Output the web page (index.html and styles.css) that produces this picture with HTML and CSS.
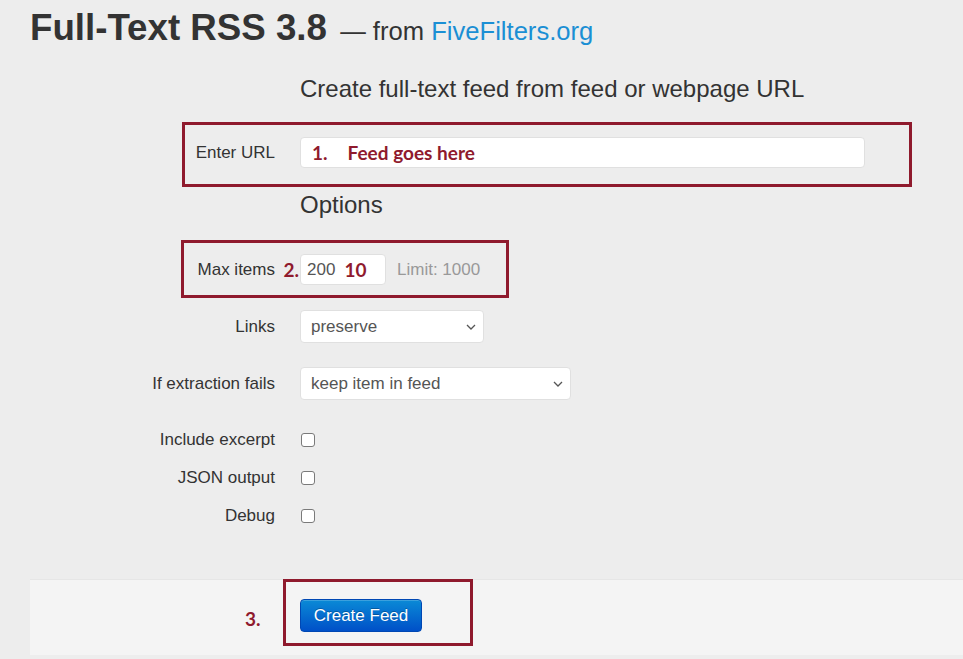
FILE: index.html
```html
<!DOCTYPE html>
<html lang="en">
<head>
    <meta charset="UTF-8">
    <meta name="viewport" content="width=device-width, initial-scale=1.0">
    <title>Full-Text RSS 3.8</title>
    <link rel="stylesheet" href="styles.css">
</head>
<body>
    <div class="page">
        <h1>Full-Text RSS 3.8 <small>&mdash; from <a href="#">FiveFilters.org</a></small></h1>

        <form class="feed-form" onsubmit="return false">
            <div class="legend">Create full-text feed from feed or webpage URL</div>

            <div class="row row-url marked">
                <label for="url">Enter URL</label>
                <div class="control">
                    <div class="input input-url">
                        <span class="note">1.</span>
                        <span class="note note-text">Feed goes here</span>
                    </div>
                </div>
            </div>

            <div class="legend legend-options">Options</div>

            <div class="row row-max marked">
                <label for="max">Max items</label>
                <div class="control">
                    <span class="note step">2.</span>
                    <div class="input input-max">
                        <span class="value">200</span>
                        <span class="note">10</span>
                    </div>
                    <span class="help">Limit: 1000</span>
                </div>
            </div>

            <div class="row row-select">
                <label for="links">Links</label>
                <div class="control">
                    <div class="select select-links">
                        <span>preserve</span>
                        <svg class="chevron" viewBox="0 0 10 6" width="10" height="6"><polyline points="1,1 5,5 9,1" fill="none" stroke="#555" stroke-width="1.3"/></svg>
                    </div>
                </div>
            </div>

            <div class="row row-select">
                <label for="exc">If extraction fails</label>
                <div class="control">
                    <div class="select select-fail">
                        <span>keep item in feed</span>
                        <svg class="chevron" viewBox="0 0 10 6" width="10" height="6"><polyline points="1,1 5,5 9,1" fill="none" stroke="#555" stroke-width="1.3"/></svg>
                    </div>
                </div>
            </div>

            <div class="row row-check row-first">
                <label for="summary">Include excerpt</label>
                <div class="control"><input type="checkbox" id="summary"></div>
            </div>
            <div class="row row-check">
                <label for="json">JSON output</label>
                <div class="control"><input type="checkbox" id="json"></div>
            </div>
            <div class="row row-check">
                <label for="debug">Debug</label>
                <div class="control"><input type="checkbox" id="debug"></div>
            </div>

            <div class="actions marked">
                <span class="note step-3">3.</span>
                <button type="submit" class="btn">Create Feed</button>
            </div>
        </form>
    </div>
</body>
</html>
```

FILE: styles.css
```css
body {
    margin: 0;
    padding: 0;
    background-color: #ededed;
    color: #333;
    font-family: "Liberation Sans", Arial, sans-serif;
    font-size: 17px;
    overflow: hidden;
}
.page {
    padding: 6px 0 0 30px;
}
h1 {
    margin: 0;
    font-size: 36.7px;
    line-height: 44px;
    font-weight: bold;
    color: #333;
}
h1 small {
    font-size: 25.6px;
    font-weight: normal;
    color: #333;
    margin-left: 3px;
}
h1 a {
    color: #1b8fd4;
    text-decoration: none;
}
.legend {
    margin: 16px 0 28px 270px;
    font-size: 24px;
    line-height: 40px;
    color: #333;
}
.legend-options {
    margin-top: 17px;
    margin-bottom: 29px;
}
.row {
    position: relative;
    display: grid;
    grid-template-columns: 245px 1fr;
    column-gap: 25px;
    align-items: center;
}
.row label {
    text-align: right;
    color: #333;
}
.control {
    position: relative;
    display: flex;
    align-items: center;
}
.input, .select {
    box-sizing: border-box;
    background-color: #fff;
    border: 1px solid #e0e0e0;
    border-radius: 4px;
    display: flex;
    align-items: center;
}
.input-url {
    width: 565px;
    height: 31px;
    padding-left: 11px;
}
.input-max {
    width: 86px;
    height: 31px;
    padding-left: 6px;
}
.input-max .value {
    color: #555;
    margin-right: 9px;
}
.help {
    color: #999;
    margin-left: 11px;
}
.row-select {
    margin-top: 25px;
}
.row-select + .row-select {
    margin-top: 24px;
}
.select {
    position: relative;
    height: 33px;
    padding-left: 10px;
    color: #555;
}
.select-links {
    width: 184px;
}
.select-fail {
    width: 271px;
}
.chevron {
    position: absolute;
    right: 7px;
    top: 13px;
}
.row-check {
    height: 24px;
    margin-top: 14px;
}
.row-first {
    margin-top: 28px;
}
.row-check input {
    appearance: none;
    -webkit-appearance: none;
    box-sizing: border-box;
    width: 14px;
    height: 14px;
    margin: 0 0 0 1px;
    border: 1px solid #7a7a7a;
    border-radius: 3px;
    background-color: #fff;
}
.actions {
    position: relative;
    margin-top: 51px;
    padding: 19px 0 23px 270px;
    background-color: #f4f4f4;
    border-top: 1px solid #e6e6e6;
}
.btn {
    box-sizing: border-box;
    width: 122px;
    height: 33px;
    padding: 0;
    font-family: "Liberation Sans", Arial, sans-serif;
    font-size: 17px;
    color: #fff;
    text-shadow: 0 -1px 0 rgba(0, 0, 0, 0.25);
    background-image: linear-gradient(to bottom, #0a8ad6, #0050c8);
    border: 1px solid #0047b3;
    border-radius: 4px;
    box-shadow: inset 0 1px 0 rgba(255, 255, 255, 0.2);
    cursor: pointer;
}

/* red step annotations */
.note {
    font-family: Lato, "Open Sans", sans-serif;
    font-weight: bold;
    font-size: 19px;
    color: #8f1a2d;
}
.note-text {
    margin-left: 20px;
}
.step {
    position: absolute;
    right: 100%;
    margin-right: 1px;
}
.step-3 {
    position: absolute;
    left: 215px;
    top: 27px;
}
.marked::after {
    content: "";
    position: absolute;
    box-sizing: border-box;
    border: 3px solid #8f1a2d;
    pointer-events: none;
}
.row-url::after {
    left: 152px;
    top: -15px;
    width: 730px;
    height: 65px;
}
.row-max::after {
    left: 151px;
    top: -14px;
    width: 328px;
    height: 58px;
}
.actions::after {
    left: 253px;
    top: -1px;
    width: 190px;
    height: 67px;
}
```
